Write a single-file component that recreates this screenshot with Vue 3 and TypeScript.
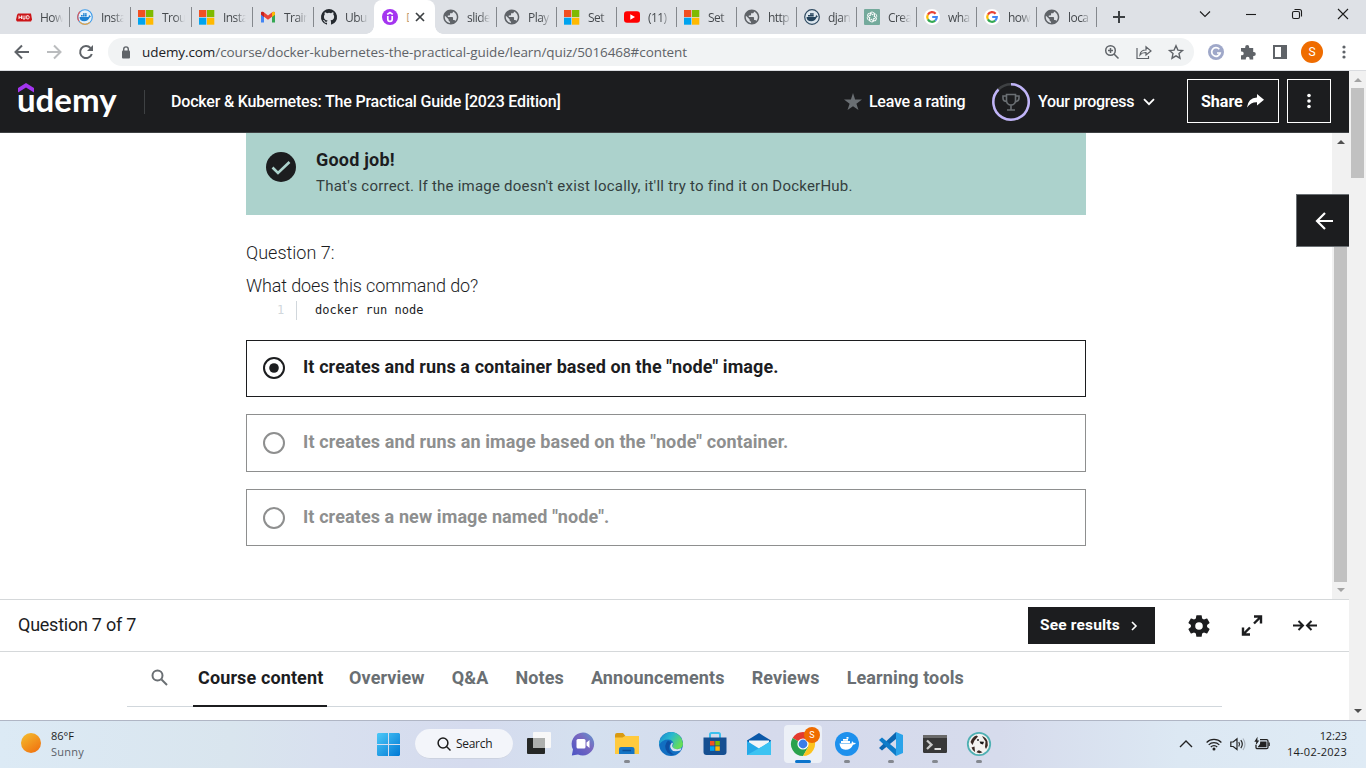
<script setup lang="ts">
interface BrowserTab { icon: string; title: string; active?: boolean }
interface Option { text: string; selected: boolean }
interface TaskApp { name: string; state?: 'open' | 'focus' }

const tabs: BrowserTab[] = [
  { icon: 'hud', title: 'How' },
  { icon: 'dockerc', title: 'Insta' },
  { icon: 'ms', title: 'Trou' },
  { icon: 'ms', title: 'Insta' },
  { icon: 'gmail', title: 'Train' },
  { icon: 'github', title: 'Ubu' },
  { icon: 'udemy', title: 'D', active: true },
  { icon: 'globe', title: 'slide' },
  { icon: 'globe', title: 'Play' },
  { icon: 'ms', title: 'Set' },
  { icon: 'youtube', title: '(11)' },
  { icon: 'ms', title: 'Set' },
  { icon: 'globe', title: 'http' },
  { icon: 'hub', title: 'djan' },
  { icon: 'gpt', title: 'Crea' },
  { icon: 'google', title: 'wha' },
  { icon: 'google', title: 'how' },
  { icon: 'globe', title: 'loca' },
]

const options: Option[] = [
  { text: 'It creates and runs a container based on the "node" image.', selected: true },
  { text: 'It creates and runs an image based on the "node" container.', selected: false },
  { text: 'It creates a new image named "node".', selected: false },
]

const sections: string[] = ['Course content', 'Overview', 'Q&A', 'Notes', 'Announcements', 'Reviews', 'Learning tools']

const apps: TaskApp[] = [
  { name: 'taskview' }, { name: 'chat' }, { name: 'files', state: 'open' }, { name: 'edge' },
  { name: 'store' }, { name: 'mail' }, { name: 'chrome', state: 'focus' }, { name: 'docker', state: 'open' },
  { name: 'vscode', state: 'open' }, { name: 'terminal', state: 'open' }, { name: 'dbeaver', state: 'open' },
]
</script>

<template>
  <div class="screen">
    <div class="tabstrip">
      <div v-for="(t, i) in tabs" :key="i" class="tab" :class="{ active: t.active, wide: i < 8, nosep: i === 5 || i === 6 }">
        <svg class="fav" viewBox="0 0 16 16">
          <template v-if="t.icon === 'hud'">
            <path d="M2 4.500h13l1 6-1 2H1L0 11l1-5z" fill="#cc1417" />
            <path d="M3 6.500v3.500M5.500 6.500v3.500M3 8.300h2.500M7 6.500V10h2V6.500M10.700 6.700h1.500q1 0 1 1.600t-1 1.600h-1.500z" fill="none" stroke="#fff" stroke-width=".9" />
          </template>
          <template v-else-if="t.icon === 'dockerc'">
            <circle cx="8" cy="8" r="7.300" fill="#e4f1fb" stroke="#3d9be9" stroke-width="1.100" />
            <path d="M2 12.200A7.300 7.300 0 0 1 3 2.700" fill="none" stroke="#e05a5a" stroke-width="1.200" />
            <path d="M2.800 13.200A7.300 7.300 0 0 0 13 13.400" fill="none" stroke="#f0a33a" stroke-width="1.200" />
            <path d="M2.500 8h9l.6-2 1.800 1.600-1.300 1q-1.400 3.700-5.400 3.700Q2.800 12.300 2.500 8zM4 6h1.700v1.500H4zM6 6h1.700v1.500H6zM8 6h1.700v1.500H8zM6 4.200h1.700v1.500H6zM8 4.200h1.700v1.500H8z" fill="#1d82d2" />
          </template>
          <template v-else-if="t.icon === 'ms'">
            <rect x="0" y="1" width="7.300" height="7" fill="#f25022" /><rect x="8" y="1" width="7.300" height="7" fill="#7fba00" />
            <rect x="0" y="8.700" width="7.300" height="7" fill="#00a4ef" /><rect x="8" y="8.700" width="7.300" height="7" fill="#ffb900" />
          </template>
          <template v-else-if="t.icon === 'gmail'">
            <path d="M1 4v9.500h3V7z" fill="#4285f4" /><path d="M15 4v9.500h-3V7z" fill="#34a853" />
            <path d="M1 3.500Q1.500 2.200 3.500 3L8 6.500 12.500 3Q14.500 2.200 15 3.500V5.500L8 10.800 1 5.500z" fill="#ea4335" />
            <path d="M12 3.400q3-1.800 3 .8v1.600l-3 2.200z" fill="#fbbc04" /><path d="M1 4.200v1.400l3 2.300V3.400q-3-1.600-3 .8z" fill="#c5221f" />
          </template>
          <path v-else-if="t.icon === 'github'" fill="#24292f" d="M8 0a8 8 0 0 0-2.530 15.590c.4.070.550-.170.550-.380v-1.490c-2.010.370-2.530-.490-2.690-.940-.090-.230-.480-.940-.820-1.130-.280-.150-.680-.520-.010-.530.630-.010 1.080.580 1.230.820.720 1.210 1.870.870 2.330.660.070-.520.280-.870.510-1.070-1.780-.200-3.640-.890-3.640-3.950 0-.870.310-1.590.820-2.150-.080-.200-.360-1.020.080-2.120 0 0 .670-.210 2.200.820a7.600 7.600 0 0 1 4 0c1.530-1.040 2.200-.820 2.200-.820.440 1.100.160 1.920.080 2.120.510.560.820 1.270.820 2.150 0 3.070-1.870 3.750-3.650 3.950.290.250.540.730.540 1.480v2.200c0 .210.150.460.550.380A8 8 0 0 0 8 0" />
          <template v-else-if="t.icon === 'udemy'">
            <circle cx="8" cy="8" r="8" fill="#a435f0" />
            <path d="M5.200 5.400L8 3.500l2.800 1.900M5.800 7v3.200q0 2.200 2.200 2.200t2.200-2.200V7" fill="none" stroke="#fff" stroke-width="1.700" />
          </template>
          <path v-else-if="t.icon === 'globe'" transform="translate(-1.200 -1) scale(.75)" fill="#5f6368" d="M12 2C6.480 2 2 6.480 2 12s4.480 10 10 10 10-4.480 10-10S17.520 2 12 2zm-1 17.930c-3.950-.49-7-3.850-7-7.930 0-.62.08-1.210.21-1.790L9 15v1c0 1.100.9 2 2 2v1.930zm6.900-2.540c-.26-.81-1-1.390-1.900-1.390h-1v-3c0-.55-.45-1-1-1H8v-2h2c.55 0 1-.45 1-1V7h2c1.100 0 2-.9 2-2v-.41c2.930 1.190 5 4.060 5 7.410 0 2.080-.8 3.970-2.100 5.390z" />
          <template v-else-if="t.icon === 'youtube'">
            <rect x="0" y="2.200" width="16" height="11.600" rx="3" fill="#f00" /><path d="M6.300 5.300v5.400L11 8z" fill="#fff" />
          </template>
          <template v-else-if="t.icon === 'hub'">
            <circle cx="8" cy="8" r="7.300" fill="#dce6ee" stroke="#2f4a61" stroke-width="1.200" />
            <path d="M2.500 8h9l.6-2 1.800 1.600-1.300 1q-1.400 3.700-5.400 3.700Q2.800 12.300 2.500 8zM4 6h5.700v1.500H4zM6 4.200h3.700v1.500H6z" fill="#24435c" />
          </template>
          <template v-else-if="t.icon === 'gpt'">
            <rect width="16" height="16" rx="1" fill="#74aa9c" />
            <g fill="none" stroke="#fff" stroke-width=".9">
              <path v-for="a in 6" :key="a" :transform="`rotate(${a * 60} 8 8)`" d="M8 6L9.800 4.900q2-.7 2.700 1.100t-.7 2.700L9.700 9.900" />
            </g>
          </template>
          <template v-else-if="t.icon === 'google'">
            <circle cx="8" cy="8" r="8" fill="#fff" />
            <g fill="none" stroke-width="2.200">
              <path d="M11.600 4.700A4.800 4.800 0 0 0 3.900 5.600" stroke="#ea4335" /><path d="M3.900 5.600a4.800 4.800 0 0 0 0 4.800" stroke="#fbbc05" />
              <path d="M3.900 10.400a4.800 4.800 0 0 0 7.300 1.200" stroke="#34a853" /><path d="M11.200 11.600A4.800 4.800 0 0 0 12.800 8H8.200" stroke="#4285f4" />
            </g>
          </template>
        </svg>
        <span class="tabtitle">{{ t.title }}</span>
        <svg v-if="t.active" class="tabclose" viewBox="0 0 10 10"><path d="M1 1l8 8M9 1L1 9" stroke="#3c4043" stroke-width="1.700" /></svg>
      </div>
      <svg class="plus" viewBox="0 0 12 12"><path d="M6 0v12M0 6h12" stroke="#3c4043" stroke-width="2" /></svg>
      <div class="winctl">
        <svg viewBox="0 0 12 12"><path d="M1 3.500l5 5 5-5" /></svg>
        <svg viewBox="0 0 12 12"><path d="M1 6.500h10" /></svg>
        <svg viewBox="0 0 12 12"><rect x="1.500" y="3.500" width="7" height="7" rx="1.500" /><path d="M3.500 1.500h5q2 0 2 2v5" /></svg>
        <svg viewBox="0 0 12 12"><path d="M1 1l10 10M11 1L1 11" /></svg>
      </div>
    </div>

    <div class="toolbar">
      <svg class="nav" viewBox="0 0 16 16"><path d="M15 8H2M8 1.500L1.500 8 8 14.500" fill="none" stroke="#5f6368" stroke-width="2" /></svg>
      <svg class="nav" viewBox="0 0 16 16"><path d="M1 8h13M8 1.500L14.500 8 8 14.500" fill="none" stroke="#babcbe" stroke-width="2" /></svg>
      <svg class="nav" viewBox="0 0 16 16"><path d="M13.800 10A6 6 0 1 1 12.500 4" fill="none" stroke="#5f6368" stroke-width="2" /><path d="M15 1v6H9z" fill="#5f6368" /></svg>
      <div class="omnibox">
        <svg class="lock" viewBox="0 0 10 13"><rect x="1" y="4.500" width="8" height="8" rx="1" fill="#5f6368" /><path d="M2.700 5V3.200a2.300 2.300 0 0 1 4.600 0V5" fill="none" stroke="#5f6368" stroke-width="1.400" /></svg>
        <span class="url"><b>udemy.com</b>/course/docker-kubernetes-the-practical-guide/learn/quiz/5016468#content</span>
        <svg class="oi" viewBox="0 0 16 16"><g fill="none" stroke="#5f6368" stroke-width="1.500"><circle cx="6.500" cy="6.500" r="4.800" /><path d="M10 10l4.500 4.500M6.500 4v5M4 6.500h5" /></g></svg>
        <svg class="oi" viewBox="0 0 16 16"><g fill="none" stroke="#5f6368" stroke-width="1.200"><path d="M1 4v10.500h11.500V12M4 11q.5-5 6-5V2.800L15 7l-5 4V8.500Q6 8.300 4 11z" /></g></svg>
        <svg class="oi" viewBox="0 0 16 16"><path d="M8 1.800l1.900 4.300 4.600.4L11 9.600l1 4.600-4-2.400-4 2.400 1-4.600-3.500-3.100 4.600-.4z" fill="none" stroke="#5f6368" stroke-width="1.400" /></svg>
      </div>
      <div class="exts">
        <svg viewBox="0 0 16 16"><circle cx="8" cy="8" r="8" fill="#9fa8c9" /><path d="M11.300 5.200A4.300 4.300 0 1 0 12.200 9H9" fill="none" stroke="#fff" stroke-width="1.700" /></svg>
        <svg viewBox="0 0 16 16"><path d="M1 4h4.200V3a2 2 0 0 1 4 0v1h4v4h.6a2 2 0 0 1 0 4h-.6v3.500H9.600v-.8a1.900 1.900 0 0 0-3.800 0v.8H1v-4.200h.8a1.900 1.900 0 0 0 0-3.800H1z" fill="#5f6368" /></svg>
        <svg viewBox="0 0 16 16"><path d="M1 1h14v14H1zM3 3v10h6V3z" fill="#5f6368" fill-rule="evenodd" /></svg>
        <span class="avatar">S</span>
        <svg viewBox="0 0 16 16"><g fill="#5f6368"><circle cx="8" cy="3" r="1.600" /><circle cx="8" cy="8" r="1.600" /><circle cx="8" cy="13" r="1.600" /></g></svg>
      </div>
    </div>

    <div class="page">
      <div class="site">
        <header>
          <div class="brand"><svg viewBox="0 0 16 10"><path d="M0 5L8 0l8 5v4.500L8 4.500 0 9.500z" fill="#a435f0" /></svg><span>udemy</span></div>
          <i class="vr"></i>
          <span class="title">Docker &amp; Kubernetes: The Practical Guide [2023 Edition]</span>
          <div class="rating"><svg viewBox="0 0 18 18"><path d="M9 0l2.100 6.600H18l-5.600 4.100L14.500 17 9 13.200 3.500 17l2.100-6.300L0 6.600h6.900z" fill="#6a6f73" /></svg><span>Leave a rating</span></div>
          <div class="progress">
            <svg class="ring" viewBox="0 0 38 38">
              <g fill="none" stroke-width="2.500"><circle cx="19" cy="19" r="17.700" stroke="#3e4143" /><path d="M19 1.300A17.700 17.700 0 1 1 6.500 6.500" stroke="#c0b4f8" /></g>
              <path d="M14.500 11.500h9v6a4.500 4.500 0 0 1-9 0zM14.500 13h-3.500v2q0 3.500 4 3.500M23.500 13h3.500v2q0 3.500-4 3.500M19 22v4.500M15 27h8" fill="none" stroke="#6a6f73" stroke-width="1.600" />
            </svg>
            <span>Your progress</span>
            <svg class="chev" viewBox="0 0 12 8"><path d="M1 1.200l5 5 5-5" fill="none" stroke="#fff" stroke-width="1.800" /></svg>
          </div>
          <div class="share"><span>Share</span><svg viewBox="0 0 17 14"><path d="M10 0l7 5.800-7 5.700V8.300Q4 8 0 13.500 1 4 10 3.500z" fill="#fff" /></svg></div>
          <div class="more"><svg viewBox="0 0 4 16"><g fill="#fff"><circle cx="2" cy="2.500" r="1.800" /><circle cx="2" cy="8" r="1.800" /><circle cx="2" cy="13.500" r="1.800" /></g></svg></div>
        </header>

        <div class="quiz">
          <main>
            <div class="alert">
              <svg viewBox="0 0 30 30"><circle cx="15" cy="15" r="15" fill="#1c1d1f" /><path d="M6.500 15.500l5.500 5.500L23.500 10" fill="none" stroke="#acd2cc" stroke-width="2.600" /></svg>
              <div><h2>Good job!</h2><p>That's correct. If the image doesn't exist locally, it'll try to find it on DockerHub.</p></div>
            </div>
            <div class="q">Question 7:</div>
            <div class="prompt">What does this command do?</div>
            <div class="codeline"><span class="no">1</span><span class="code">docker run node</span></div>
            <div v-for="(o, i) in options" :key="i" class="option" :class="{ selected: o.selected, tall: i === 1 }">
              <svg viewBox="0 0 22 22"><circle cx="11" cy="11" r="10" fill="none" stroke="currentColor" stroke-width="2" /><circle v-if="o.selected" cx="11" cy="11" r="4.800" fill="currentColor" /></svg>
              <span>{{ o.text }}</span>
            </div>
          </main>
          <div class="sb inner"><i class="up"></i><i class="thumb"></i><i class="down"></i></div>
          <div class="drawer"><svg viewBox="0 0 18 18"><path d="M18 9H2M10 1L2 9l8 8" fill="none" stroke="#fff" stroke-width="2.200" /></svg></div>
        </div>

        <div class="foot">
          <span class="count">Question 7 of 7</span>
          <div class="results"><span>See results</span><svg viewBox="0 0 6 10"><path d="M1 1l4 4-4 4" fill="none" stroke="#fff" stroke-width="1.600" /></svg></div>
          <svg class="fi gear" viewBox="0 0 24 24"><path fill="#1c1d1f" d="M19.430 12.980c.040-.320.070-.640.070-.980s-.030-.660-.070-.980l2.110-1.650c.190-.150.240-.420.120-.640l-2-3.460c-.120-.220-.390-.300-.610-.220l-2.490 1c-.520-.400-1.080-.730-1.690-.980l-.380-2.650A.49.490 0 0 0 14 2h-4c-.250 0-.460.180-.490.420l-.380 2.650c-.610.250-1.170.590-1.690.980l-2.490-1c-.230-.090-.490 0-.610.220l-2 3.460c-.130.220-.070.490.120.640l2.110 1.650c-.040.320-.070.650-.070.980s.030.660.070.980l-2.110 1.650c-.190.150-.240.420-.120.640l2 3.460c.120.220.390.300.610.220l2.490-1c.520.400 1.080.730 1.690.980l.380 2.650c.030.240.240.420.490.420h4c.250 0 .460-.180.490-.420l.380-2.650c.610-.250 1.170-.590 1.690-.980l2.490 1c.230.090.490 0 .610-.220l2-3.460c.120-.220.070-.490-.120-.640zM12 15.500A3.500 3.500 0 1 1 12 8.500a3.500 3.500 0 0 1 0 7" /></svg>
          <svg class="fi expand" viewBox="0 0 20 21"><path d="M12 1.500h7v7M18.500 2l-6.500 6.500M8 19.500H1v-7M1.500 19L8 12.500" fill="none" stroke="#1c1d1f" stroke-width="2.400" /></svg>
          <svg class="fi shrink" viewBox="0 0 24 11"><path d="M0 5.500h9M5.500 1l4.500 4.500L5.500 10M24 5.500h-9M18.500 1L14 5.500l4.500 4.500" fill="none" stroke="#1c1d1f" stroke-width="2" /></svg>
        </div>

        <nav>
          <svg class="find" viewBox="0 0 17 17"><g fill="none" stroke="#6a6f73" stroke-width="2"><circle cx="6.500" cy="6.500" r="5" /><path d="M10.500 10.500L16 16" /></g></svg>
          <div v-for="(s, i) in sections" :key="s" class="section" :class="{ on: i === 0 }"><span>{{ s }}</span></div>
        </nav>
      </div>
      <div class="sb outer"><i class="up"></i><i class="thumb"></i><i class="down"></i></div>
    </div>

    <footer class="taskbar">
      <i class="sun"></i>
      <div class="weather"><div class="deg">86°F</div><div class="sunny">Sunny</div></div>
      <svg class="start" viewBox="0 0 23 23"><defs><linearGradient id="win" x1="0" y1="0" x2="1" y2="1" gradientUnits="objectBoundingBox"><stop offset="0" stop-color="#4cc9f8" /><stop offset="1" stop-color="#0078d4" /></linearGradient></defs><path d="M1 0h10v11H0V1zM12 0h10l1 1v10H12zM0 12h11v11H1l-1-1zM12 12h11v10l-1 1H12z" fill="url(#win)" /></svg>
      <div class="pill"><svg viewBox="0 0 14 14"><g fill="none" stroke="#1b1b1b" stroke-width="1.500"><circle cx="6" cy="6" r="4.900" /><path d="M9.500 9.500l4 4" /></g></svg><span>Search</span></div>
      <div class="apps">
        <div v-for="a in apps" :key="a.name" class="app" :class="a.state">
          <svg viewBox="0 0 24 24">
            <template v-if="a.name === 'taskview'">
              <rect x="0" y="6" width="18" height="16" rx="1" fill="#262826" /><rect x="6" y="0" width="18" height="16" rx="1" fill="#f8f8f8" /><path d="M6 6h12v10H6z" fill="#aeb0ae" />
            </template>
            <template v-else-if="a.name === 'chat'">
              <defs><linearGradient id="cht" x1="0" y1="1" x2="1" y2="0"><stop offset="0" stop-color="#4a54c5" /><stop offset=".6" stop-color="#7a68c0" /><stop offset="1" stop-color="#5f9bcf" /></linearGradient></defs>
              <path d="M12 .5A11.500 11.500 0 1 1 7 22.500L.8 23.500 2 17.500A11.500 11.500 0 0 1 12 .5z" fill="url(#cht)" /><rect x="5.500" y="7" width="9" height="9.500" rx="1.500" fill="#fff" /><path d="M15.500 10.500l3-2.500v8l-3-2.500z" fill="#fff" />
            </template>
            <template v-else-if="a.name === 'files'">
              <path d="M0 3q0-2 2-2h6l2.500 3H24v17H0z" fill="#d99a12" /><path d="M0 5.500h7.500L10 4h14v18H0z" fill="#ffca3e" /><path d="M4 22v-5q0-2 2-2h11q2.500 0 2.500 2v5z" fill="#1474c4" /><path d="M7.500 18.500h8.500" stroke="#0b4f94" stroke-width="1.500" />
            </template>
            <template v-else-if="a.name === 'edge'">
              <defs><linearGradient id="edg" x1="0" y1="0" x2="1" y2=".5"><stop offset="0" stop-color="#1684cf" /><stop offset=".5" stop-color="#29b9cf" /><stop offset="1" stop-color="#65dd58" /></linearGradient></defs>
              <circle cx="12" cy="12" r="12" fill="#116fc2" /><path d="M.2 10A12 12 0 0 1 24 11.500q0 5.500-6.500 5.500-4 0-4-2t1-3Q14 7.500 9 7.500 3 7.500.2 13z" fill="url(#edg)" /><path d="M9 8.500Q3.500 14 8.500 20.500q3 2.500 7 2.500-5-3-5.500-7-.3-3 2-5Q11 9 9 8.500z" fill="#0d4fa3" /><path d="M14 11.500q-2 3 1 5 4 1.500 7.500-.5l-1 2.500Q18 19.500 14 19q-5-4-1-8.500z" fill="#d7e1ef" />
            </template>
            <template v-else-if="a.name === 'store'">
              <path d="M7 6V2.500q0-1.500 1.500-1.500h7q1.500 0 1.500 1.500V6" fill="none" stroke="#3cc0ee" stroke-width="2" /><path d="M.5 5.500h23V20q0 3-3 3h-17q-3 0-3-3z" fill="#154f91" /><path d="M7 9h4.500v4.500H7z" fill="#f25022" /><path d="M12.300 9h4.500v4.500h-4.500z" fill="#7fba00" /><path d="M7 14.300h4.500v4.500H7z" fill="#00a4ef" /><path d="M12.300 14.300h4.500v4.500h-4.500z" fill="#ffb900" />
            </template>
            <template v-else-if="a.name === 'mail'">
              <path d="M0 8.500L12 1l12 7.500v5H0z" fill="#0b58a8" /><path d="M2 8.500h20v3L12 17 2 11.500z" fill="#f3f5f8" /><path d="M0 9l12 7.500L24 9v14H0z" fill="#25a9e8" /><path d="M0 23l16-9 8-5v14z" fill="#3cc3f2" />
            </template>
            <template v-else-if="a.name === 'chrome'">
              <path d="M12 12L1.600 6A12 12 0 0 1 22.400 6z" fill="#e33b2e" /><path d="M12 12L1.600 6A12 12 0 0 0 12 24l5.200-9z" fill="#2aa24c" /><path d="M12 12L22.400 6A12 12 0 0 1 12 24l5.200-9z" fill="#fcc31e" /><circle cx="12" cy="12" r="5.600" fill="#fff" /><circle cx="12" cy="12" r="4.400" fill="#3a7de8" />
            </template>
            <template v-else-if="a.name === 'docker'">
              <circle cx="12" cy="12" r="12" fill="#1d90ed" /><path d="M4.500 11.500h12l.5-2.500 1.500 1.700 2.500.3q-1 1.700-3 1.700-2 5-7.500 5-5.500 0-6-6.200zM6 9h9v2H6zM8 7h5v1.800H8zM11.500 5h2v1.800h-2z" fill="#fff" />
            </template>
            <template v-else-if="a.name === 'vscode'">
              <path d="M17 0l7 3v18l-7 3V0z" fill="#2aa3ea" /><path d="M17 0v7L3 18.500 0 16z" fill="#0b66b0" /><path d="M17 24v-7L3 5.500 0 8z" fill="#0d7cc9" />
            </template>
            <template v-else-if="a.name === 'terminal'">
              <rect x="0" y="3" width="24" height="18" rx="1.200" fill="#383838" /><path d="M0 4q0-1 1-1h22q1 0 1 1v2H0z" fill="#6a6a6a" /><path d="M4 8.500l4.500 4.200L4 17" fill="none" stroke="#cacaca" stroke-width="2.300" /><path d="M11.500 17h6.500" stroke="#fff" stroke-width="1.700" />
            </template>
            <template v-else>
              <circle cx="12" cy="12" r="11.200" fill="#f4f3f1" stroke="#4fb0b3" stroke-width="1.800" />
              <path d="M3.500 10q2-5.500 6-6.500l1.500 1-3.500 4L5.500 13zM15 4q4.500 1.500 5.500 5.500l.3 4-1.800 3.500-1-2 .5-5.500-2-3zM4.500 15.500l3-1 .5 5.500q-2.500-1.500-3.500-4.500z" fill="#3a2a24" />
              <circle cx="11" cy="8" r="1" fill="#222" /><path d="M12.500 9.500l4.500.3-1 2.700-2.500-.8z" fill="#181818" /><path d="M9.500 20.300q2-3 3.500-1.500l2.500 1.500-3 1z" fill="#3a2a24" />
            </template>
          </svg>
          <span v-if="a.name === 'chrome'" class="badge">S</span>
        </div>
      </div>
      <div class="tray">
        <svg viewBox="0 0 16 16" class="t1"><path d="M2 11l6-6 6 6" fill="none" stroke="#222" stroke-width="1.400" /></svg>
        <svg viewBox="0 0 16 16" class="t2"><g fill="none" stroke="#222" stroke-width="1.200"><path d="M.6 6.500a10.500 10.500 0 0 1 14.800 0M2.700 8.800a7.500 7.500 0 0 1 10.600 0M4.800 11a4.500 4.500 0 0 1 6.400 0" /></g><circle cx="8" cy="13" r="1.500" fill="#222" /></svg>
        <svg viewBox="0 0 16 16" class="t3"><g fill="none" stroke="#222" stroke-width="1.200"><path d="M.8 6v4.500h2.400L7 13.500V2.800L3.200 6zM8.800 6q1.500 2.200 0 4.500M10.800 4.200q3 4 0 8" /><path d="M13 2.500q4 5.700 0 11.500" stroke="#aab3bd" /></g></svg>
        <svg viewBox="0 0 16 16" class="t4"><path d="M6 3.700h6.500q1.500 0 1.500 1.500v6q0 1.500-1.500 1.500h-9Q2 12.700 2 11.200V9" fill="none" stroke="#222" stroke-width="1.300" /><path d="M6.200 5.500h6.300v5.700H3.500L6 8zM14.500 6.500h1.300v3.500h-1.300zM3.500.8L.3 5.800h2L1.600 9.500 5.300 4.500H3.400z" fill="#222" /></svg>
      </div>
      <div class="clock"><div class="time">12:23</div><div class="date">14-02-2023</div></div>
    </footer>
  </div>
</template>

<style>
html, body { margin: 0; overflow: hidden; }
</style>

<style scoped>
* { box-sizing: border-box; }
svg { display: block; flex: none; overflow: visible; }
i { display: block; flex: none; }
.screen { width: 1366px; height: 768px; display: flex; flex-direction: column; background: #fff; font-family: "Open Sans", "Noto Sans", sans-serif; overflow: hidden; }

.tabstrip { height: 34px; flex: none; background: #dee1e6; display: flex; padding-left: 8px; }
.tab { width: 60px; flex: none; height: 34px; display: flex; align-items: center; padding-left: 8px; position: relative; }
.tab.wide { width: 61px; }
.tab::after { content: ""; position: absolute; right: -1px; top: 7px; width: 1px; height: 20px; background: #84888d; }
.tab.nosep::after { display: none; }
.fav { width: 16px; height: 16px; }
.tabtitle { font-size: 12px; letter-spacing: -.55px; color: #45494d; width: 23px; margin-left: 8px; overflow: hidden; white-space: nowrap; -webkit-mask-image: linear-gradient(90deg, #000 55%, transparent); mask-image: linear-gradient(90deg, #000 55%, transparent); }
.active { background: #fff; border-radius: 8px 8px 0 0; }
.active::before { content: ""; position: absolute; left: -8px; right: -8px; bottom: 0; height: 8px; background: radial-gradient(circle at 0 0, transparent 7.500px, #fff 8px) left / 8px 8px no-repeat, radial-gradient(circle at 100% 0, transparent 7.500px, #fff 8px) right / 8px 8px no-repeat; }
.active .tabtitle { width: 3px; color: #c9a37c; mask-image: none; -webkit-mask-image: none; }
.tabclose { width: 10px; height: 10px; margin-left: 6px; }
.plus { width: 12px; height: 12px; margin: 11px 0 0 17px; }
.winctl { margin-left: auto; display: flex; gap: 34px; padding: 8px 17px 0 0; }
.winctl svg { width: 12px; height: 12px; fill: none; stroke: #1c1c1c; stroke-width: 1.1; }

.toolbar { height: 37px; flex: none; background: #fff; border-bottom: 1px solid #dadce0; display: flex; align-items: center; padding-left: 14px; }
.nav { width: 16px; height: 16px; margin-right: 16px; }
.omnibox { width: 1086px; height: 28px; margin-left: -2px; border-radius: 14px; background: #f1f3f4; display: flex; align-items: center; padding: 0 10px 0 13px; }
.lock { width: 10px; height: 13px; margin-right: 11px; }
.url { font-size: 13.5px; letter-spacing: -.08px; color: #5f6368; margin-right: auto; white-space: nowrap; }
.url b { font-weight: 400; color: #202124; }
.oi { width: 16px; height: 16px; margin-left: 16px; }
.exts { display: flex; align-items: center; gap: 16px; margin-left: 14px; }
.exts svg { width: 16px; height: 16px; }
.avatar { width: 22px; height: 22px; margin: 0 -3px; border-radius: 50%; background: #ef6c00; color: #fff; font: 12px/22px Roboto, sans-serif; text-align: center; }

.page { height: 649px; flex: none; display: flex; font-family: Roboto, "Liberation Sans", sans-serif; color: #1c1d1f; }
.site { width: 1349px; flex: none; }
header { height: 62px; background: #1c1d1f; border-bottom: 1px solid #3e4143; display: flex; align-items: center; color: #fff; font-size: 16px; font-weight: 500; padding: 0 18px; white-space: nowrap; }
.brand { width: 100px; position: relative; height: 62px; }
.brand svg { position: absolute; left: 0; top: 12px; width: 16px; height: 10px; }
.brand span { display: block; margin-left: -1px; font: 700 33px/57px Lato, sans-serif; }
.vr { width: 1px; height: 24px; background: #3e4143; margin: 0 26px 0 26px; }
.title { width: 391px; letter-spacing: -.19px; }
.rating { display: flex; align-items: center; margin-left: 282px; }
.rating svg { width: 18px; height: 18px; margin-right: 7px; }
.rating span { width: 97px; letter-spacing: -.27px; }
.progress { display: flex; align-items: center; margin-left: 26px; }
.ring { width: 38px; height: 38px; margin-right: 8px; }
.progress span { width: 97px; letter-spacing: -.3px; }
.chev { width: 12px; height: 8px; margin-left: 8px; }
.share, .more { height: 44px; border: 1px solid #fff; display: flex; align-items: center; justify-content: center; font-weight: 700; margin-top: -1px; }
.share { width: 92px; margin-left: 32px; padding-left: 13px; justify-content: flex-start; }
.share span { width: 42px; }
.share svg { width: 17px; height: 14px; margin-left: 4px; }
.more { width: 44px; margin-left: 8px; }
.more svg { width: 4px; height: 16px; }

.quiz { height: 466px; position: relative; display: flex; justify-content: space-between; }
main { width: 840px; margin-left: 246px; }
.alert { height: 82px; background: #acd2cc; display: flex; padding: 19px 20px 0; }
.alert svg { width: 30px; height: 30px; margin-right: 20px; }
.alert h2 { margin: -3px 0 0; font-size: 18px; line-height: 22px; font-weight: 700; letter-spacing: .2px; }
.alert p { margin: 4px 0 0; font-size: 15px; line-height: 22px; color: #34403f; white-space: nowrap; letter-spacing: .225px; }
.q { margin-top: 26px; font-size: 18px; line-height: 24px; font-weight: 300; }
.prompt { margin-top: 9px; font-size: 18px; line-height: 24px; font-weight: 300; letter-spacing: -.13px; }
.codeline { display: flex; height: 19px; margin: 3px 0 20px; font: 12px/19px "DejaVu Sans Mono", monospace; }
.no { width: 51px; border-right: 1px solid #d1d7dc; padding-left: 31px; color: #d1d7dc; margin-right: 18px; }
.option { height: 57px; border: 1px solid #8e8f8f; display: flex; align-items: flex-start; padding: 15px 0 0 16px; margin-bottom: 17px; color: #8e8f8f; font-weight: 700; font-size: 18px; line-height: 24px; letter-spacing: .1px; }
.option.tall { height: 58px; letter-spacing: .115px; }
.option svg { width: 22px; height: 22px; margin: 2px 18px 0 0; }
.option.selected { border-color: #1c1d1f; color: #1c1d1f; padding-top: 14px; }

.sb { width: 17px; flex: none; background: #f1f1f1; display: flex; flex-direction: column; align-items: center; }
.up { border: 4px solid transparent; border-top: 0; border-bottom: 4px solid #505050; margin-top: 7px; }
.down { border: 4px solid transparent; border-bottom: 0; border-top: 4px solid #505050; margin-bottom: 7px; margin-top: auto; }
.thumb { width: 13px; background: #c1c1c1; margin-top: 6px; }
.inner .thumb { height: 342px; margin-top: 96px; }
.outer .up { border-bottom-color: #a3a3a3; }
.inner .down { border-top-color: #a3a3a3; }
.outer .thumb { height: 90px; }
.drawer { position: absolute; right: 0; top: 61px; width: 53px; height: 53px; background: #1c1d1f; border: 1px solid #6a6f73; border-right: 0; display: flex; align-items: center; padding-left: 18px; }
.drawer svg { width: 18px; height: 18px; }

.foot { height: 53px; border-top: 1px solid #d5d8da; border-bottom: 1px solid #d5d8da; display: flex; align-items: center; padding-left: 18px; white-space: nowrap; }
.count { font-size: 18px; letter-spacing: -.25px; margin: -2px auto 0 0; }
.results { width: 127px; height: 37px; background: #1c1d1f; color: #fff; font-weight: 700; font-size: 15.5px; letter-spacing: .17px; display: flex; align-items: center; padding-left: 12px; }
.results span { width: 80px; margin-top: -1px; }
.results svg { width: 6px; height: 10px; margin-left: 11px; }
.gear { width: 26px; height: 26px; margin-left: 31px; }
.expand { width: 20px; height: 21px; margin-left: 30px; }
.shrink { width: 24px; height: 11px; margin: 0 32px 0 31px; }

nav { height: 55px; width: 1095px; margin-left: 127px; border-bottom: 1px solid #d1d7dc; display: flex; font-weight: 700; font-size: 18px; letter-spacing: .12px; color: #6a6f73; white-space: nowrap; }
.find { width: 17px; height: 17px; margin: 17px 29px 0 24px; }
.section { line-height: 24px; padding-top: 14px; margin-right: 27px; height: 55px; }
.section.on { width: 134px; padding-left: 5px; margin: 0 22px 0 -4px; color: #1c1d1f; border-bottom: 2px solid #1c1d1f; }

.taskbar { height: 48px; flex: none; border-top: 1px solid #b0b6c5; padding-bottom: 1px; background: linear-gradient(90deg, #dceaf5 0, #d9e5ee 230px, #d8e0ef 330px, #d5dbee 470px, #d4e0ef 590px, #d5daec 760px, #d6dbec 1000px, #dce8f3 1180px, #dfebf5 100%); display: flex; align-items: center; color: #1c1c1c; }
.sun { width: 20px; height: 20px; border-radius: 50%; margin-left: 21px; background: linear-gradient(145deg, #f4c030, #f06a0c); margin-top: -2px; }
.weather { margin: -1px 0 0 10px; width: 60px; font-size: 11px; line-height: 16px; }
.sunny { color: #5a6068; letter-spacing: .25px; }
.start { width: 23px; height: 23px; margin-left: 266px; }
.pill { width: 98px; height: 30px; margin-left: 15px; border-radius: 15px; background: #f3f5fa; display: flex; align-items: center; padding-left: 22px; font-size: 12px; letter-spacing: -.3px; border-bottom: 1px solid #ccd2e0; }
.pill svg { width: 14px; height: 14px; margin-right: 5px; }
.apps { display: flex; gap: 6px; margin-left: 7px; }
.app { width: 38px; height: 38px; position: relative; display: flex; align-items: center; justify-content: center; border-radius: 4px; }
.app svg { width: 24px; height: 24px; }
.app.focus { background: #ecf0f7; }
.open::after, .focus::after { content: ""; position: absolute; bottom: 0; left: 16px; width: 6px; height: 3px; border-radius: 2px; background: #84888f; }
.focus::after { width: 16px; left: 11px; background: #0b74cc; }
.badge { position: absolute; right: 2px; top: 2px; width: 16px; height: 16px; border-radius: 50%; background: #ef6c00; color: #fff; font: 9px/16px Roboto, sans-serif; text-align: center; }
.tray { margin: -1px 0 0 auto; display: flex; gap: 8px; }
.tray svg { width: 16px; height: 16px; }
.tray .t1 { margin-right: 4px; }
.clock { width: 96px; margin-top: -1px; padding-right: 19px; text-align: right; font-size: 11px; line-height: 16px; display: flex; flex-direction: column; align-items: flex-end; white-space: nowrap; }
.time { letter-spacing: -.15px; }
.date { letter-spacing: .27px; }
</style>
